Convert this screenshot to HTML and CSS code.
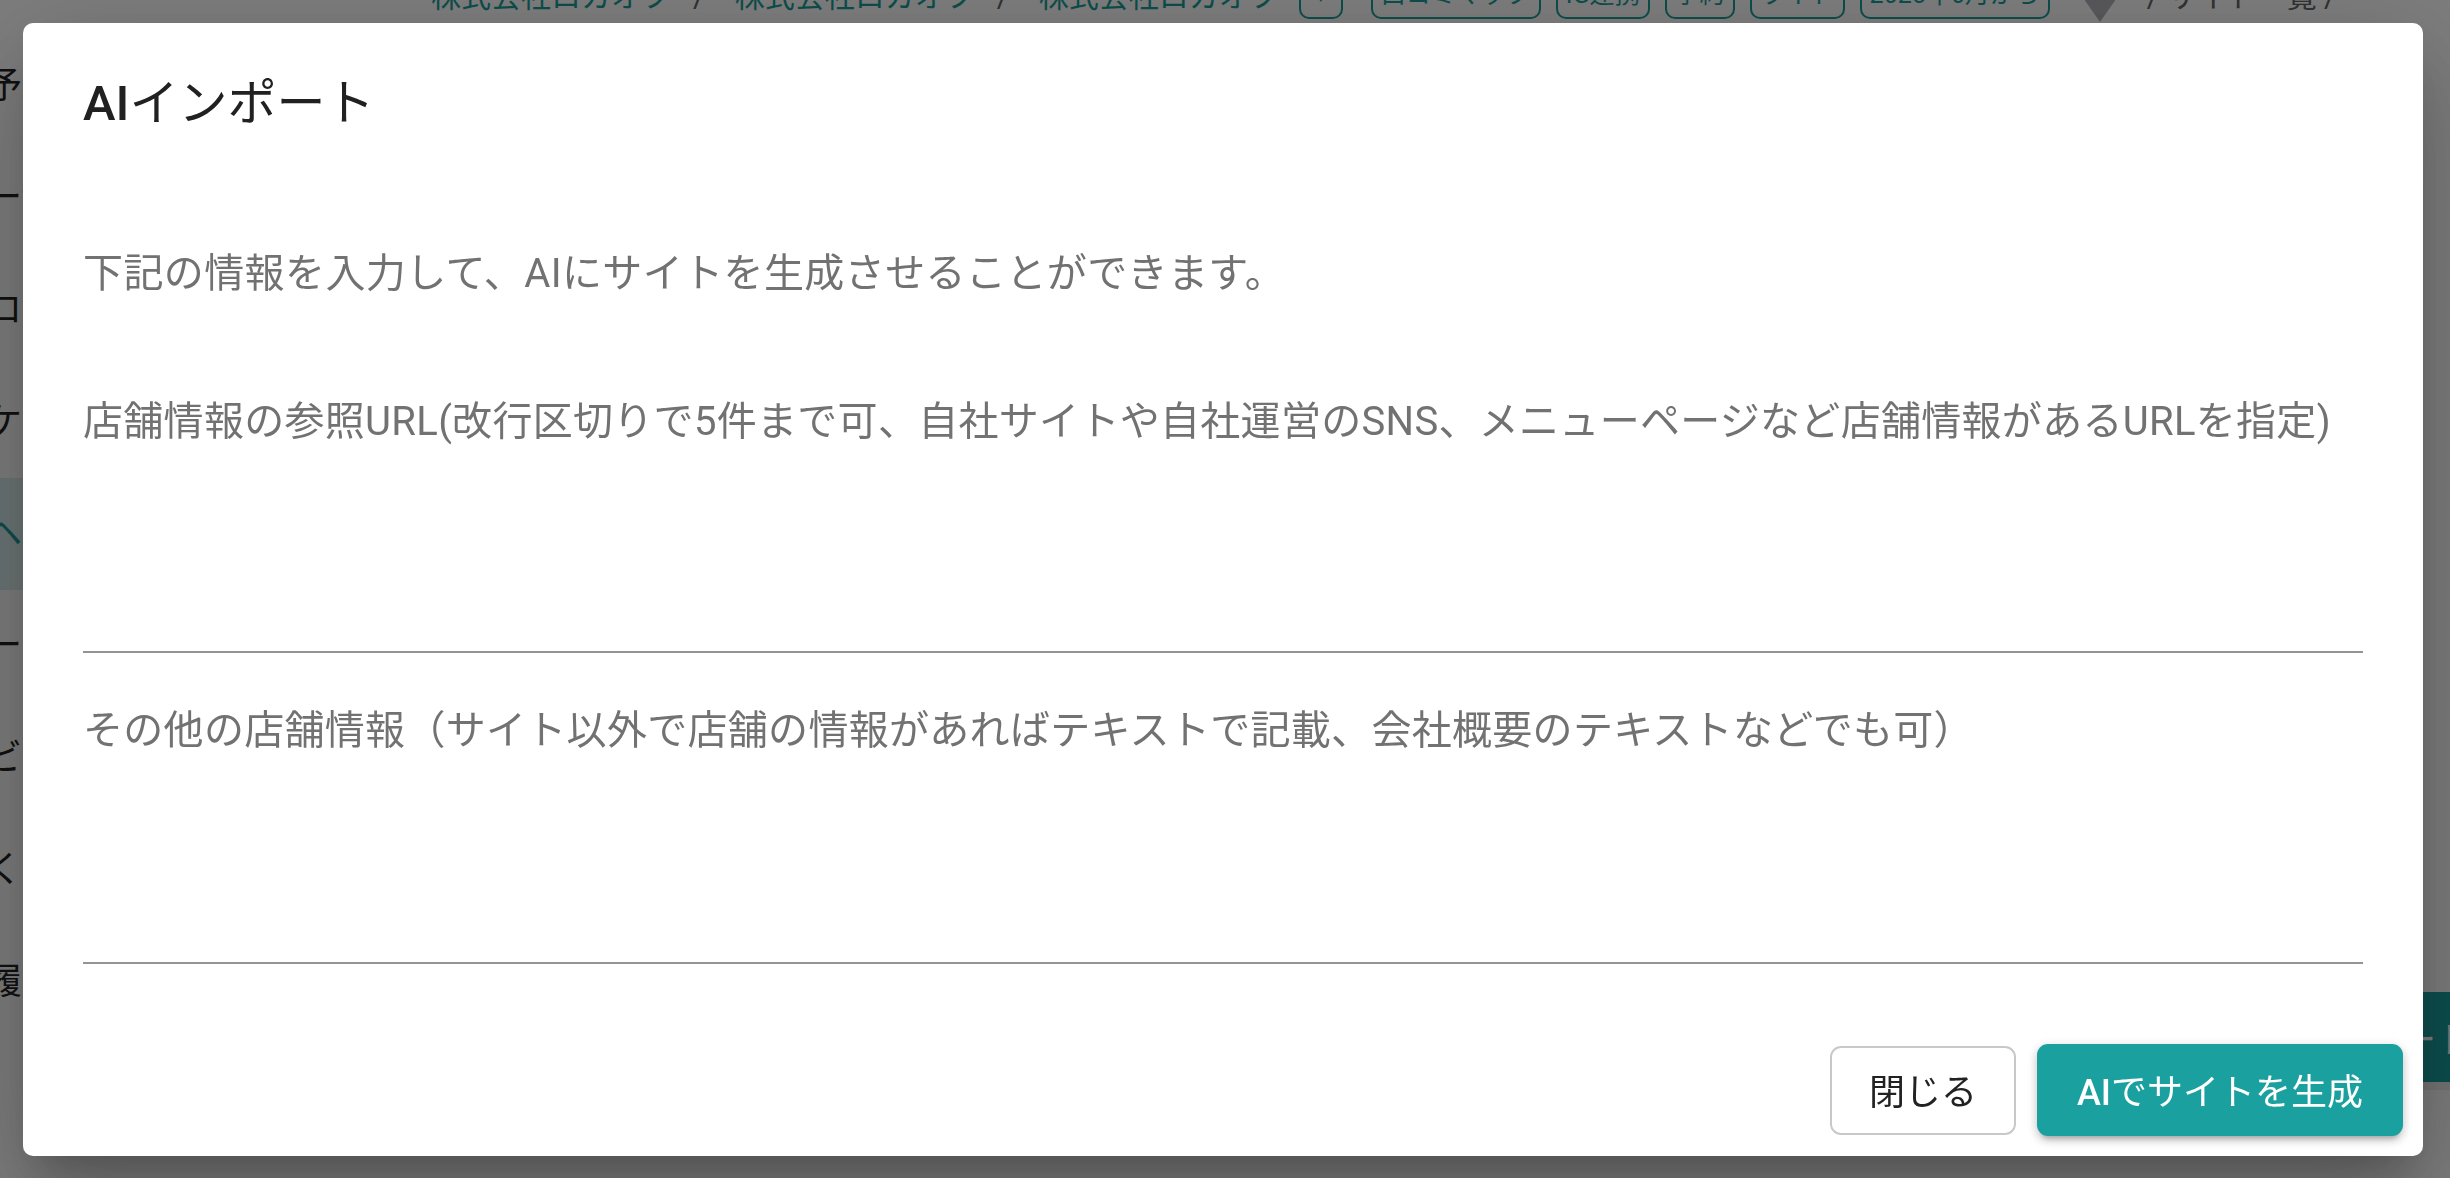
FILE: index.html
```html
<!DOCTYPE html>
<html lang="ja">
<head>
    <meta charset="UTF-8">
    <title>AIインポート - サイト一覧</title>
    <meta name="viewport" content="width=device-width, initial-scale=1">
    <link rel="stylesheet" href="styles.css">
</head>
<body>
    <div class="page">
        <header class="topbar">
            <nav class="crumbs">
                <a href="#">株式会社ロカオフ</a><span class="sep">/</span>
                <a href="#">株式会社ロカオフ</a><span class="sep">/</span>
                <a href="#">株式会社ロカオフ</a>
            </nav>
            <div class="chips">
                <span class="chip chip-small">▼</span>
                <span class="chip">口コミマップ</span>
                <span class="chip">IG連携</span>
                <span class="chip">予約</span>
                <span class="chip">ライト</span>
                <span class="chip">2025年6月から</span>
            </div>
            <span class="caret"></span>
            <span class="crumb-tail">/ サイト一覧 /</span>
        </header>
        <div class="layout">
            <aside class="sidebar">
                <a href="#">予約管理</a>
                <a href="#">ーザー管理</a>
                <a href="#">ロゴ設定</a>
                <a href="#">ケータイ</a>
                <a href="#" class="active">ヘッダー</a>
                <a href="#">ーナー</a>
                <a href="#">ビュー</a>
                <a href="#">くちコミ</a>
                <a href="#">履歴</a>
            </aside>
            <main class="main">
                <div class="toolbar">
                    <button class="btn-import">サイトをインポート</button>
                </div>
                <div class="table-head"></div>
            </main>
        </div>
    </div>

    <div class="backdrop">
        <div class="dialog" role="dialog">
            <h2 class="dialog-title"><span class="latin">AI</span>インポート</h2>
            <div class="dialog-content">
                <p class="intro">下記の情報を入力して、AIにサイトを生成させることができます。</p>
                <div class="field">
                    <label for="ref-urls">店舗情報の参照URL(改行区切りで5件まで可、自社サイトや自社運営のSNS、メニューページなど店舗情報があるURLを指定)</label>
                    <textarea id="ref-urls"></textarea>
                </div>
                <div class="field">
                    <label for="other-info">その他の店舗情報（サイト以外で店舗の情報があればテキストで記載、会社概要のテキストなどでも可）</label>
                    <textarea id="other-info"></textarea>
                </div>
            </div>
            <div class="dialog-actions">
                <button class="btn btn-outline">閉じる</button>
                <button class="btn btn-primary"><span class="latin">AI</span>でサイトを生成</button>
            </div>
        </div>
    </div>
</body>
</html>
```

FILE: styles.css
```css
body {
    margin: 0;
    width: 2450px;
    height: 1178px;
    overflow: hidden;
    font-family: Roboto, "Noto Sans CJK JP", sans-serif;
    background: #fff;
    color: #222;
}

/* page behind the dialog */
.page {
    width: 2450px;
}
.topbar {
    display: flex;
    align-items: flex-end;
    height: 60px;
    margin-top: -41px;
    padding-left: 431px;
    white-space: nowrap;
}
.crumbs {
    font-size: 30px;
    line-height: 30px;
    margin-bottom: 7px;
    color: #666;
}
.crumbs a {
    color: #1a9e9a;
    text-decoration: none;
}
.crumbs .sep { margin: 0 22px; }
.chips {
    display: flex;
    gap: 15px;
    margin-left: 20px;
}
.chip {
    display: flex;
    align-items: center;
    height: 50px;
    padding: 0 8px;
    border: 2px solid #1a9e9a;
    border-radius: 10px;
    color: #1a9e9a;
    font-size: 25px;
}
.chip-small {
    padding: 0 10px;
    font-size: 20px;
    margin-right: 13px;
}
.caret {
    width: 0;
    height: 0;
    margin: 0 26px -3px 29px;
    border-left: 21px solid transparent;
    border-right: 21px solid transparent;
    border-top: 30px solid #b4b4bc;
}
.crumb-tail {
    font-size: 30px;
    line-height: 30px;
    margin-bottom: 7px;
    color: #666;
}
.layout {
    display: flex;
}
.sidebar {
    width: 420px;
    padding-top: 11px;
    display: flex;
    flex-direction: column;
    overflow: hidden;
}
.sidebar a {
    height: 112px;
    line-height: 112px;
    font-size: 36px;
    text-indent: -14px;
    color: #222;
    text-decoration: none;
    white-space: nowrap;
}
.sidebar a.active {
    background: #dbeeee;
    color: #1a9e9a;
}
.main {
    flex: 1;
    display: flex;
    flex-direction: column;
}
.toolbar {
    display: flex;
    justify-content: flex-end;
    margin-top: 973px;
}
.btn-import {
    height: 90px;
    padding: 0 40px;
    margin-right: -62px;
    border: 0;
    border-radius: 10px;
    background: #1ba0a0;
    color: #fff;
    font: inherit;
    font-size: 36px;
}
.table-head {
    height: 8px;
    background: #eee;
}

/* dialog */
.backdrop {
    position: fixed;
    inset: 0;
    display: flex;
    padding: 23px 27px 22px 23px;
    background: rgba(0, 0, 0, 0.51);
}
.dialog {
    flex: 1;
    display: flex;
    flex-direction: column;
    background: #fff;
    border-radius: 10px;
    box-shadow: 0 27px 37px -17px rgba(0,0,0,.2), 0 59px 93px 7px rgba(0,0,0,.14), 0 22px 113px 20px rgba(0,0,0,.12);
}
.dialog-title {
    margin: 0;
    padding: 42px 60px 0;
    font-size: 49px;
    line-height: 78px;
    font-weight: 400;
    color: #212121;
}
.latin { font-weight: 500; }
.dialog-content {
    padding: 0 60px;
}
.intro {
    margin: 101px 0 0;
    font-size: 40px;
    letter-spacing: 0.4px;
    line-height: 59px;
    color: #727272;
}
.field {
    display: flex;
    flex-direction: column;
    margin-top: 91px;
}
.field + .field { margin-top: 50px; }
.field label {
    font-size: 40px;
    letter-spacing: 0.3px;
    line-height: 56px;
    color: #727272;
    white-space: nowrap;
}
.field textarea {
    height: 201px;
    padding: 0;
    border: 0;
    border-bottom: 2px solid #949494;
    background: transparent;
    resize: none;
    outline: none;
    font: inherit;
    font-size: 40px;
}
.field + .field textarea { height: 203px; }
.dialog-actions {
    margin-top: auto;
    display: flex;
    justify-content: flex-end;
    align-items: center;
    gap: 21px;
    padding: 0 20px 20px;
}
.btn {
    font: inherit;
    font-size: 36px;
    border-radius: 11px;
    padding-bottom: 4px;
    cursor: pointer;
}
.btn-outline {
    height: 89px;
    padding-left: 37px;
    padding-right: 37px;
    background: #fff;
    border: 2px solid #c8c8c8;
    color: #222;
}
.btn-primary {
    height: 92px;
    padding-left: 40px;
    padding-right: 40px;
    background: #1ba0a0;
    border: 0;
    color: #fff;
    box-shadow: 0 7px 5px -5px rgba(0,0,0,.2), 0 5px 10px rgba(0,0,0,.14), 0 2px 12px rgba(0,0,0,.12);
}
```
